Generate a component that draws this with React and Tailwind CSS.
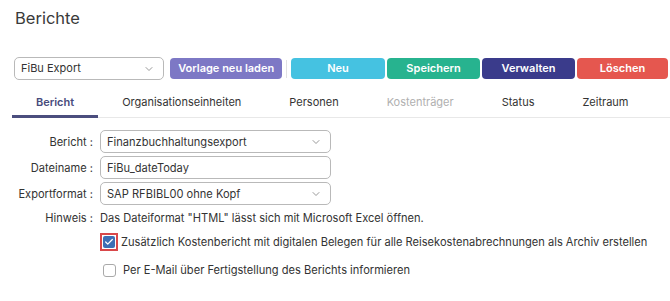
import { ChevronDown, Check } from "lucide-react";

const tabs = [
  { label: "Bericht", active: true },
  { label: "Organisationseinheiten" },
  { label: "Personen" },
  { label: "Kostenträger", disabled: true },
  { label: "Status" },
  { label: "Zeitraum" },
];

const Select = ({ value, className }) => (
  <div
    className={`flex items-center justify-between border border-[#b9b9b9] rounded-[5px] bg-white pl-[6px] pr-[8px] ${className}`}
  >
    <span>{value}</span>
    <ChevronDown size={12} strokeWidth={1.5} className="text-[#777]" />
  </div>
);

const App = () => {
  return (
    <div className="w-[670px] h-[301px] bg-white overflow-hidden font-['Inter',sans-serif] text-[#333]">
      {/* Title */}
      <h1 className="pl-[15px] pt-[6px] text-[16.5px] leading-[24px] text-[#3a3a3a]">Berichte</h1>

      {/* Toolbar */}
      <div className="flex items-center mt-[27px] pl-[14px] pr-[2px] text-[11px]">
        <Select value="FiBu Export" className="w-[152px] h-[23px]" />
        <button className="ml-[6px] w-[113px] h-[21px] rounded-[4px] bg-[#7d78c5] text-white font-semibold">
          Vorlage neu laden
        </button>
        <div className="mx-[4px] w-px h-[18px] bg-[#e2e2e2]" />
        <div className="flex gap-[2px]">
          <button className="w-[94px] h-[21px] rounded-[4px] bg-[#45c2e1] text-white font-semibold">Neu</button>
          <button className="w-[93px] h-[21px] rounded-[4px] bg-[#27b38f] text-white font-semibold">Speichern</button>
          <button className="w-[93px] h-[21px] rounded-[4px] bg-[#3a3b8b] text-white font-semibold">Verwalten</button>
          <button className="w-[91px] h-[21px] rounded-[4px] bg-[#e5574f] text-white font-semibold">Löschen</button>
        </div>
      </div>

      {/* Tabs */}
      <div className="flex mt-[10px] ml-[12px] border-b border-[#e8e8e8] text-[11px] leading-[16px]">
        {tabs.map((t) => (
          <div
            key={t.label}
            className={`px-[24px] pt-[4px] pb-[5px] border-b-[3px] -mb-px ${
              t.active
                ? "font-semibold text-[#484b7c] border-[#4b4e7e]"
                : t.disabled
                ? "text-[#b0b0b0] border-transparent"
                : "text-[#333] border-transparent"
            }`}
          >
            {t.label}
          </div>
        ))}
      </div>

      {/* Form */}
      <div className="mt-[12px] text-[11.1px] leading-[14px]">
        <div className="grid grid-cols-[100px_1fr] gap-y-[3px] items-center">
          <span className="text-right pr-[7px]">Bericht :</span>
          <Select value="Finanzbuchhaltungsexport" className="w-[231px] h-[23px]" />

          <span className="text-right pr-[7px]">Dateiname :</span>
          <div className="w-[231px] h-[23px] flex items-center border border-[#b9b9b9] rounded-[5px] px-[6px]">
            FiBu_dateToday
          </div>

          <span className="text-right pr-[7px]">Exportformat :</span>
          <Select value="SAP RFBIBL00 ohne Kopf" className="w-[231px] h-[23px]" />

          <span className="text-right pr-[7px] mt-[3px]">Hinweis :</span>
          <span className="mt-[3px]">Das Dateiformat "HTML" lässt sich mit Microsoft Excel öffnen.</span>
        </div>

        <div className="ml-[100px] mt-[8px] flex items-center gap-[3px]">
          <div className="w-[18px] h-[18px] border-2 border-[#d9484a] flex items-center justify-center">
            <div className="w-[12px] h-[12px] rounded-[2px] bg-[#3d6fb5] flex items-center justify-center">
              <Check size={10} strokeWidth={3} className="text-white" />
            </div>
          </div>
          <span>Zusätzlich Kostenbericht mit digitalen Belegen für alle Reisekostenabrechnungen als Archiv erstellen</span>
        </div>

        <div className="ml-[103px] mt-[12px] flex items-center gap-[7px]">
          <div className="w-[13px] h-[13px] rounded-[3px] border border-[#a9a9a9] bg-white" />
          <span>Per E-Mail über Fertigstellung des Berichts informieren</span>
        </div>
      </div>
    </div>
  );
};

export default App;
